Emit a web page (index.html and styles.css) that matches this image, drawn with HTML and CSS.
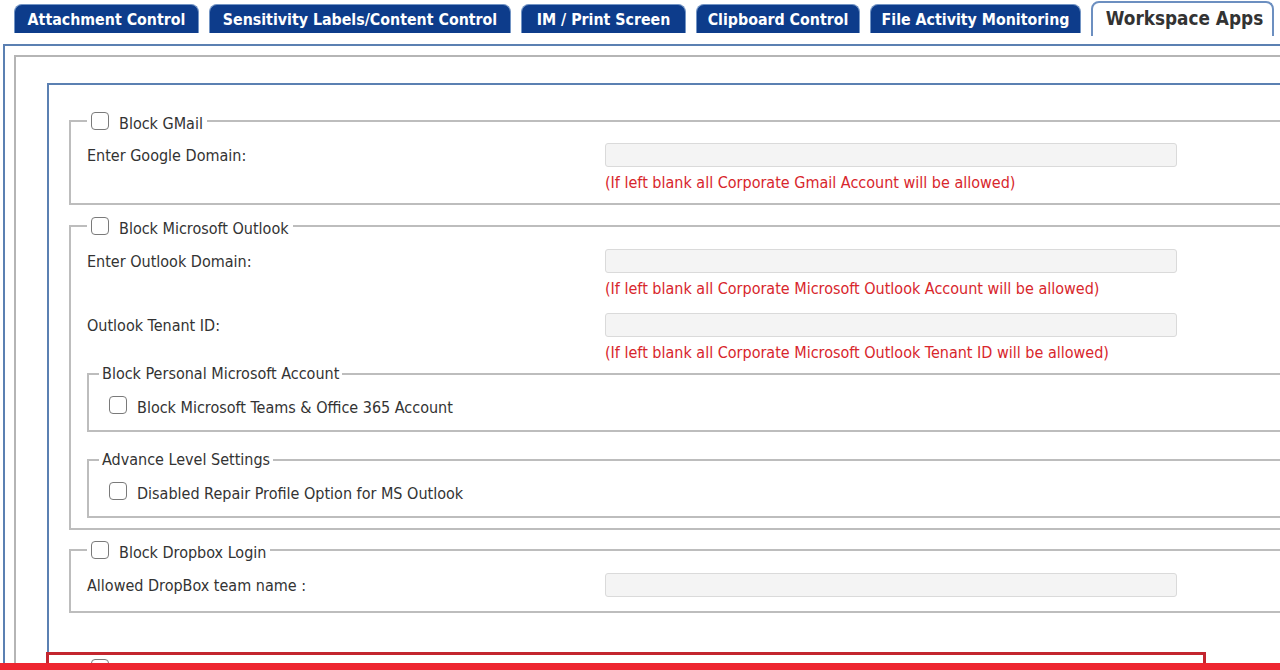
FILE: index.html
```html
<!DOCTYPE html>
<html lang="en">
<head>
    <meta charset="UTF-8">
    <title>Workspace Apps</title>
    <link rel="stylesheet" href="styles.css">
</head>
<body>

<div class="page">
    <div class="tabs">
        <div class="tab">Attachment Control</div>
        <div class="tab">Sensitivity Labels/Content Control</div>
        <div class="tab">IM / Print Screen</div>
        <div class="tab">Clipboard Control</div>
        <div class="tab">File Activity Monitoring</div>
        <div class="tab active">Workspace Apps</div>
    </div>

    <div class="outer">
        <div class="gray-box">
            <div class="blue-box">

                <fieldset class="group group-first">
                    <legend><input type="checkbox" class="chk"><span>Block GMail</span></legend>
                    <div class="row">
                        <label>Enter Google Domain:</label>
                        <div class="field">
                            <input type="text" class="txt">
                            <div class="note">(If left blank all Corporate Gmail Account will be allowed)</div>
                        </div>
                    </div>
                </fieldset>

                <fieldset class="group group-outlook">
                    <legend><input type="checkbox" class="chk"><span>Block Microsoft Outlook</span></legend>
                    <div class="row">
                        <label>Enter Outlook Domain:</label>
                        <div class="field">
                            <input type="text" class="txt">
                            <div class="note">(If left blank all Corporate Microsoft Outlook Account will be allowed)</div>
                        </div>
                    </div>
                    <div class="row row-next">
                        <label>Outlook Tenant ID:</label>
                        <div class="field">
                            <input type="text" class="txt">
                            <div class="note">(If left blank all Corporate Microsoft Outlook Tenant ID will be allowed)</div>
                        </div>
                    </div>

                    <fieldset class="sub sub-first">
                        <legend>Block Personal Microsoft Account</legend>
                        <div class="check-row"><input type="checkbox" class="chk"><span>Block Microsoft Teams &amp; Office 365 Account</span></div>
                    </fieldset>

                    <fieldset class="sub sub-second">
                        <legend>Advance Level Settings</legend>
                        <div class="check-row"><input type="checkbox" class="chk"><span>Disabled Repair Profile Option for MS Outlook</span></div>
                    </fieldset>
                </fieldset>

                <fieldset class="group group-dropbox">
                    <legend><input type="checkbox" class="chk"><span>Block Dropbox Login</span></legend>
                    <div class="row">
                        <label>Allowed DropBox team name :</label>
                        <div class="field">
                            <input type="text" class="txt">
                        </div>
                    </div>
                </fieldset>

                <fieldset class="group group-next">
                    <legend><input type="checkbox" class="chk"></legend>
                </fieldset>

            </div>
        </div>
    </div>

    <!-- highlight drawn over the screen -->
    <div class="highlight"></div>
</div>
<div class="red-band"></div>

</body>
</html>
```

FILE: styles.css
```css
body {
    margin: 0;
    overflow: hidden;
    background: #fff;
    font-family: "DejaVu Sans Condensed", "DejaVu Sans", sans-serif;
    color: #333;
}
.page {
    position: relative;
    width: 1400px;
    height: 670px;
}
.tabs {
    display: grid;
    grid-template-columns: 185px 302px 165px 164px 211px 183px;
    column-gap: 10px;
    align-items: start;
    padding-left: 14px;
    height: 44px;
}
.tab {
    margin-top: 4px;
    height: 29px;
    box-sizing: border-box;
    display: flex;
    align-items: center;
    justify-content: center;
    background-color: #0d3c8b;
    border: 1px solid #7395c5;
    border-bottom: none;
    border-radius: 8px 8px 0 0;
    color: #fff;
    font-size: 15.8px;
    font-weight: 700;
    white-space: nowrap;
}
.tab.active {
    margin-top: 1px;
    height: 35px;
    background-color: #fff;
    border: 2px solid #6c8fc0;
    border-bottom: none;
    color: #333;
    font-size: 18.8px;
    padding: 0 0 3px 4px;
}
.outer {
    margin-left: 3px;
    border: 2px solid #5b80b2;
    border-right: none;
    padding: 9px 0 0 9px;
    height: 700px;
}
.gray-box {
    border: 2px solid #b5b5b5;
    border-right: none;
    padding: 26px 0 0 31px;
    height: 700px;
}
.blue-box {
    border: 2px solid #5b80b2;
    border-right: none;
    padding: 27px 0 0 20px;
    height: 700px;
}
.group {
    margin: 0;
    border: 2px solid #bdbdbd;
    border-right: none;
    padding: 14px 0 14px 16px;
    min-width: 0;
}
.group-first {
    padding-top: 13px;
    padding-bottom: 12px;
}
.group-outlook {
    margin-top: 12px;
    padding-bottom: 10px;
}
.group-dropbox {
    margin-top: 11px;
}
.group-next {
    margin-top: 46px;
}
legend {
    padding: 0 4px;
    display: flex;
    align-items: center;
    height: 18px;
    font-size: 16px;
    line-height: 18px;
}
legend span {
    margin-top: 6px;
}
.chk {
    appearance: none;
    -webkit-appearance: none;
    margin: 0 10px 0 0;
    width: 18px;
    height: 18px;
    border: 1px solid #7a7a7a;
    border-radius: 4px;
    background: #fff;
    flex: none;
}
.row {
    display: grid;
    grid-template-columns: 518px 572px;
    font-size: 16px;
}
.row label {
    padding-top: 2px;
    line-height: 22px;
}
.row-next {
    margin-top: 16px;
}
.txt {
    display: block;
    box-sizing: border-box;
    width: 572px;
    height: 24px;
    margin: 0;
    background: #f4f4f4;
    border: 1px solid #dadada;
    border-radius: 3px;
}
.note {
    margin-top: 8px;
    line-height: 16px;
    color: #d8262c;
    font-size: 16px;
    white-space: nowrap;
}
.sub {
    margin: 4px 0 0 0;
    border: 2px solid #bdbdbd;
    border-right: none;
    padding: 13px 0 13px 20px;
}
.sub legend {
    margin-left: -10px;
    padding: 0 3px;
    display: block;
}
.sub-second {
    margin-top: 19px;
}
.check-row {
    display: flex;
    align-items: flex-start;
    font-size: 16px;
    line-height: 18px;
}
.check-row span {
    padding-top: 3px;
}
.highlight {
    position: absolute;
    left: 46px;
    top: 652px;
    width: 1160px;
    height: 60px;
    box-sizing: border-box;
    border: 3px solid #c3262f;
}
.red-band {
    position: fixed;
    left: 0;
    right: 0;
    bottom: 0;
    height: 7px;
    background-color: #ee2630;
}
```
